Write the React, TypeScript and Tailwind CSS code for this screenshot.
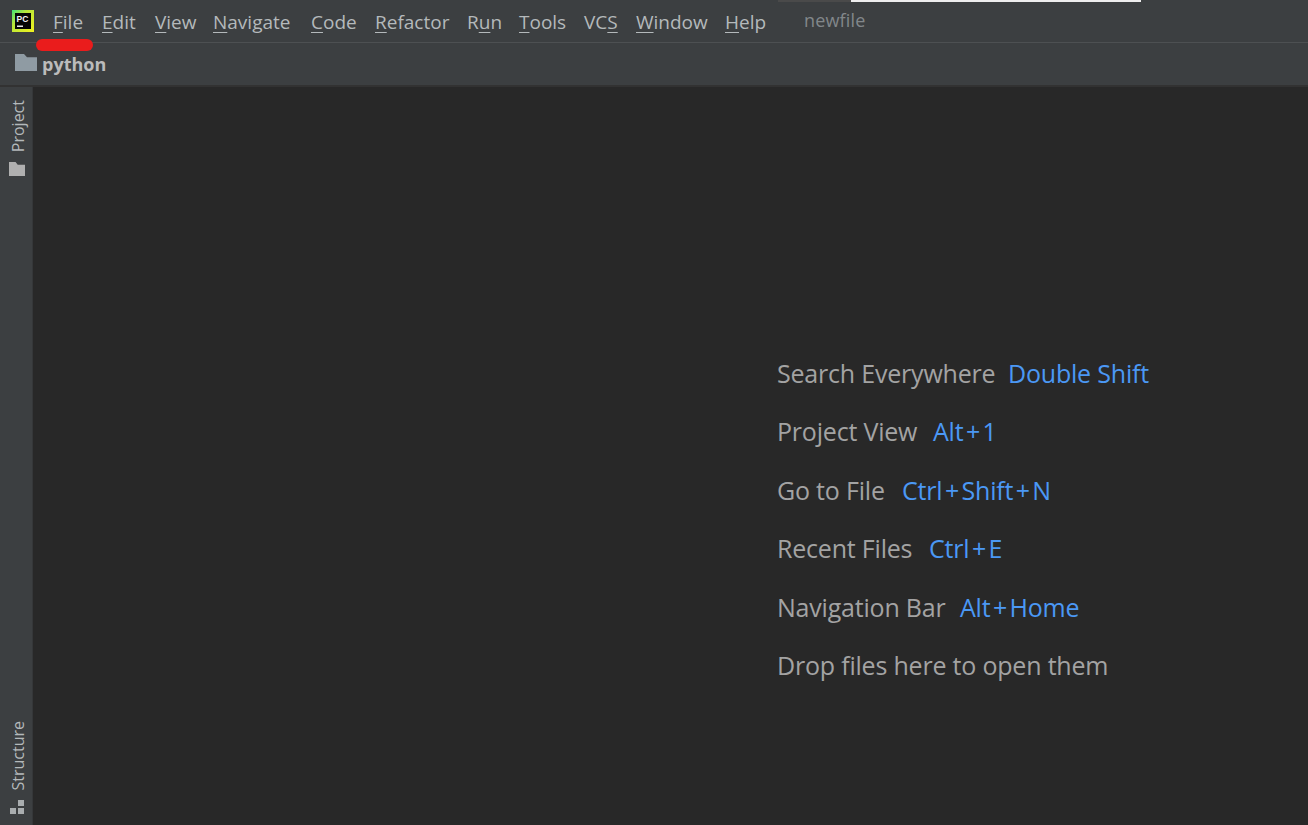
import React from 'react';

const menus: [string, string, string, string][] = [
  ['', 'F', 'ile', 'w-[49px]'],
  ['', 'E', 'dit', 'w-[53px]'],
  ['', 'V', 'iew', 'w-[58px]'],
  ['', 'N', 'avigate', 'w-[98px]'],
  ['', 'C', 'ode', 'w-[64px]'],
  ['', 'R', 'efactor', 'w-[92px]'],
  ['R', 'u', 'n', 'w-[52px]'],
  ['', 'T', 'ools', 'w-[65px]'],
  ['VC', 'S', '', 'w-[52px]'],
  ['', 'W', 'indow', 'w-[89px]'],
  ['', 'H', 'elp', 'w-[79px]'],
];

const hints: [string, string[], string][] = [
  ['Search Everywhere', ['Double Shift'], 'w-[231px]'],
  ['Project View', ['Alt', '1'], 'w-[156px]'],
  ['Go to File', ['Ctrl', 'Shift', 'N'], 'w-[125px]'],
  ['Recent Files', ['Ctrl', 'E'], 'w-[152px]'],
  ['Navigation Bar', ['Alt', 'Home'], 'w-[183px]'],
  ['Drop files here to open them', [], ''],
];

const Folder = ({ className }: { className: string }) => (
  <svg viewBox="0 0 22 16" className={className} preserveAspectRatio="none">
    <path d="M0 0H9L12 3H22V16H0Z" fill="currentColor" />
  </svg>
);

const Logo = () => (
  <svg viewBox="0 0 22 22" className="w-[22px] h-[22px] shrink-0">
    <defs>
      <linearGradient id="pc" x1="0" y1="0" x2="1" y2="1">
        <stop offset="0" stopColor="#3fe07a" />
        <stop offset="0.35" stopColor="#b6e63a" />
        <stop offset="1" stopColor="#f2f21e" />
      </linearGradient>
    </defs>
    <rect width="22" height="22" fill="url(#pc)" />
    <rect x="3" y="3" width="16" height="16" fill="#050505" />
    <rect x="5" y="15.5" width="6" height="1.5" fill="#e8e8e8" />
    <text x="4.5" y="12" fill="#f2f2f2" fontSize="8.5" fontWeight="700" fontFamily="'Liberation Sans', sans-serif">PC</text>
  </svg>
);

export default function App() {
  return (
    <div className="relative w-[1308px] h-[825px] overflow-hidden flex flex-col bg-[#282828] font-['Open_Sans',sans-serif]">
      <div className="h-[43px] shrink-0 bg-[#3c3f41] border-b border-[#4d5052] flex items-center pl-[12px] relative">
        <Logo />
        <div className="flex ml-[19px] text-[19px] text-[#b4b9bb] leading-[26px] pt-[1px] whitespace-nowrap">
          {menus.map(([a, u, b, w], i) => (
            <span key={i} className={w}>
              {a}
              <span className="underline underline-offset-[3px] decoration-1">{u}</span>
              {b}
            </span>
          ))}
        </div>
        <span className="mb-[3px] text-[18px] tracking-[0.15px] leading-[24px] text-[#82878a]">newfile</span>
        <div className="absolute top-0 left-[778px] w-[73px] h-[2px] bg-[#4a4a4a]" />
        <div className="absolute top-0 left-[851px] w-[290px] h-[2px] bg-[#eeeeee]" />
      </div>
      <div className="absolute top-[39px] left-[36px] w-[57px] h-[12px] rounded-[6px] bg-[#ea1c1c]" />

      <div className="h-[44px] shrink-0 bg-[#3c3f41] border-b-2 border-[#323232] flex items-center pl-[15px]">
        <Folder className="w-[22px] h-[17px] text-[#8f9ba3] mb-[4px]" />
        <span className="ml-[5px] text-[18px] font-bold text-[#bbbbbb] leading-[24px]">python</span>
      </div>

      <div className="flex-1 flex min-h-0">
        <div className="w-[33px] shrink-0 bg-[#3c3f41] border-r border-[#353739] flex flex-col justify-between items-center text-[#b4b9bb] text-[16px] pl-[1px]">
          <div className="flex flex-col items-center pt-[13px]">
            <span className="[writing-mode:vertical-rl] rotate-180 leading-[20px] ml-[2px]">Project</span>
            <Folder className="w-[16px] h-[14px] mt-[10px] text-[#b0b0b0]" />
          </div>
          <div className="flex flex-col items-center pb-[11px]">
            <span className="[writing-mode:vertical-rl] rotate-180 leading-[20px] ml-[2px]">Structure</span>
            <svg viewBox="0 0 14 14" className="w-[14px] h-[14px] mt-[9px] text-[#a9adaf]">
              <path d="M8 0H14V6H8ZM0 8H6V14H0ZM8 8H14V14H8Z" fill="currentColor" />
            </svg>
          </div>
        </div>

        <div className="flex-1 pl-[744px] pt-[270px] text-[25px] tracking-[-0.2px] leading-[33px] text-[#a3a3a3] flex flex-col gap-[25.4px]">
          {hints.map(([label, keys, w]) => (
            <div key={label} className="flex whitespace-nowrap">
              <span className={w}>{label}</span>
              <span className="text-[#4b98f5]">
                {keys.map((k, i) => (
                  <React.Fragment key={k}>
                    {i > 0 && <span className="px-[2.5px]">+</span>}
                    {k}
                  </React.Fragment>
                ))}
              </span>
            </div>
          ))}
        </div>
      </div>
    </div>
  );
}
